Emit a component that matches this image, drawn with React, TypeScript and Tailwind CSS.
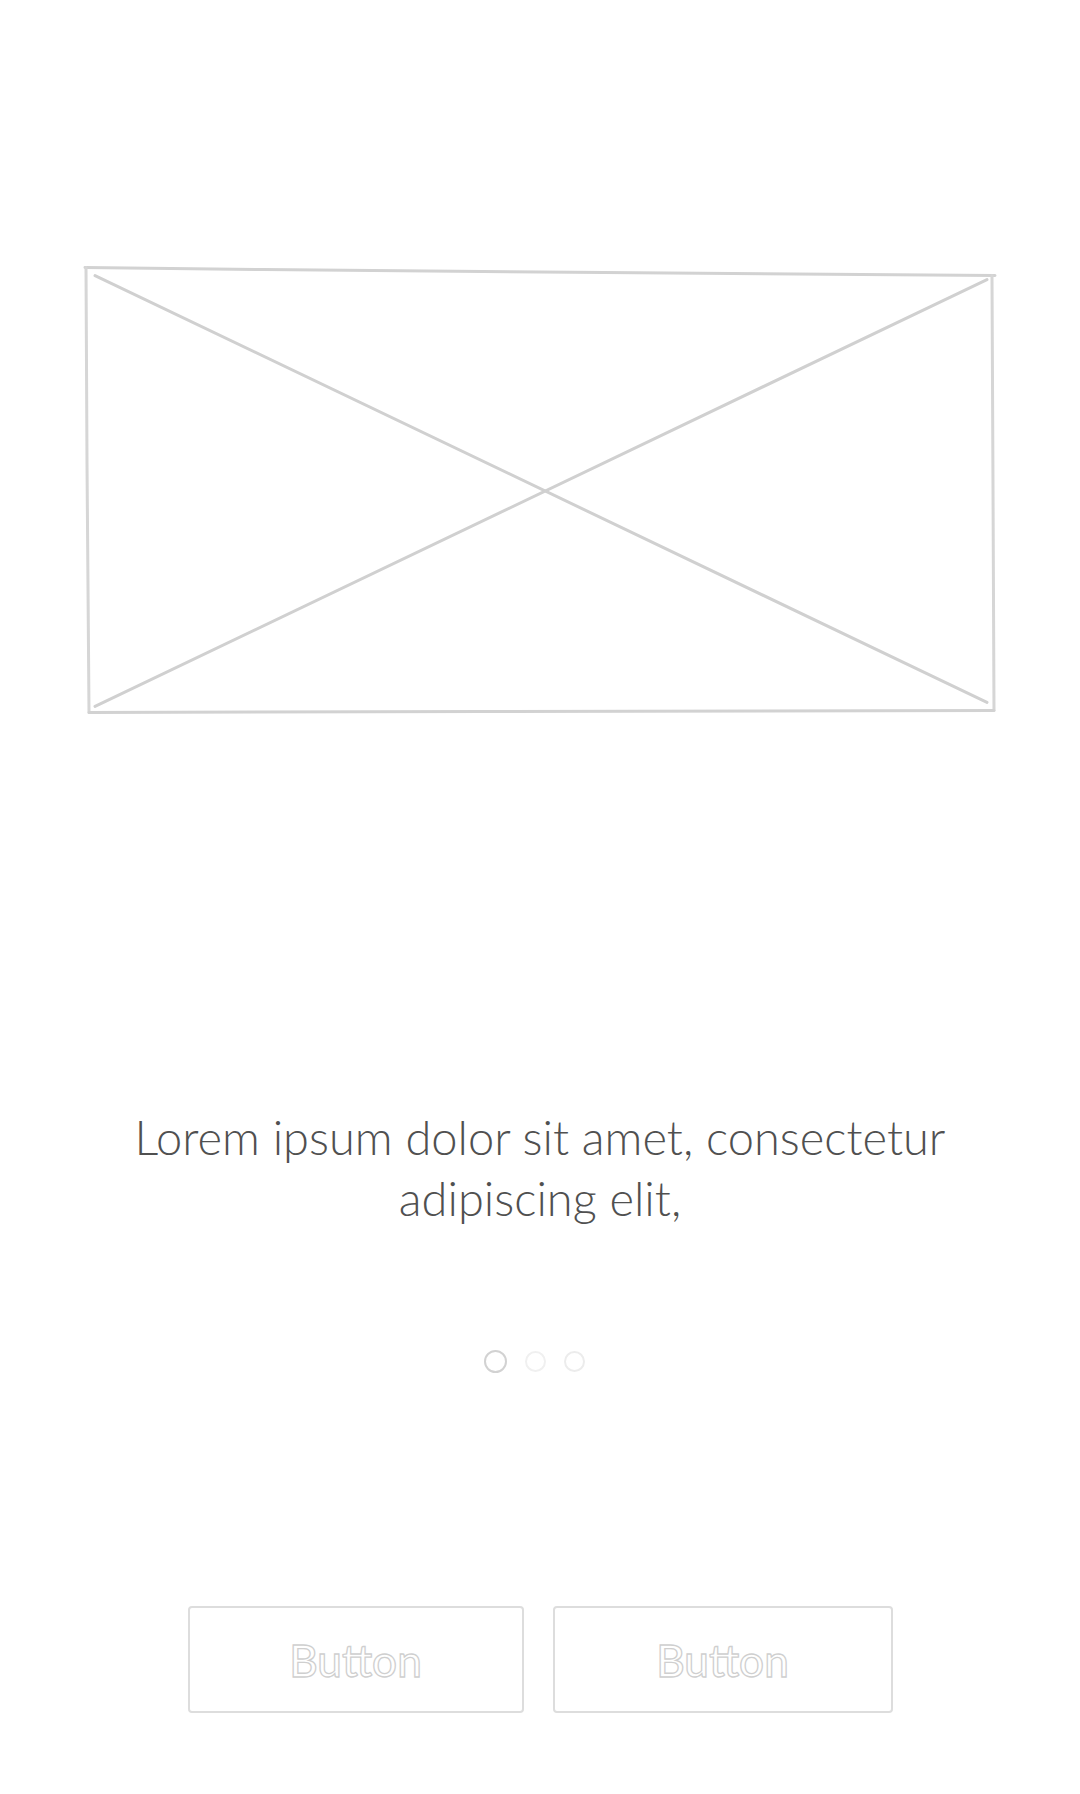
import React from "react"

function Placeholder() {
  return (
    <svg viewBox="0 0 912 452" className="w-full h-full" fill="none" strokeLinecap="round">
      <path d="M2 4 L180 6 L520 9 L910 12" stroke="#d2d2d2" strokeWidth="3" />
      <path d="M3 4 L4 200 L6 448" stroke="#d6d6d6" strokeWidth="3" />
      <path d="M907 12 L908 220 L909 446" stroke="#d6d6d6" strokeWidth="3" />
      <path d="M6 448 L400 447 L909 446" stroke="#d2d2d2" strokeWidth="3" />
      <path d="M12 12 L902 438" stroke="#d0d0d0" strokeWidth="3" />
      <path d="M902 16 L12 442" stroke="#d0d0d0" strokeWidth="3" />
    </svg>
  )
}

function Dots() {
  return (
    <div className="flex items-center gap-[18px]">
      <span className="w-[23px] h-[23px] rounded-full border-2 border-[#d2d2d2]" />
      <span className="w-[21px] h-[21px] rounded-full border-2 border-[#f0f0f0]" />
      <span className="w-[21px] h-[21px] rounded-full border-2 border-[#ececec]" />
    </div>
  )
}

function SketchButton({ width }: { width: string }) {
  return (
    <button
      className={`${width} h-[107px] rounded-[4px] border-2 border-[#dddddd] bg-white flex items-center justify-center text-[44px] text-white [-webkit-text-stroke:1.3px_#cfcfcf] font-['Lato','Open_Sans',sans-serif] font-medium`}
    >
      Button
    </button>
  )
}

export default function App() {
  return (
    <div className="w-[1080px] h-[1794px] bg-white flex flex-col items-center font-['Lato','Open_Sans',sans-serif]">
      <div className="mt-[262px] w-[914px] h-[456px]">
        <Placeholder />
      </div>

      <p className="mt-[389px] w-[940px] text-center text-[47px] leading-[61px] font-light text-[#505050]">
        Lorem ipsum dolor sit amet, consectetur adipiscing elit,
      </p>

      <div className="mt-[121px] -ml-[12px]">
        <Dots />
      </div>

      <div className="mt-[233px] flex gap-[29px]">
        <SketchButton width="w-[336px]" />
        <SketchButton width="w-[340px]" />
      </div>
    </div>
  )
}
